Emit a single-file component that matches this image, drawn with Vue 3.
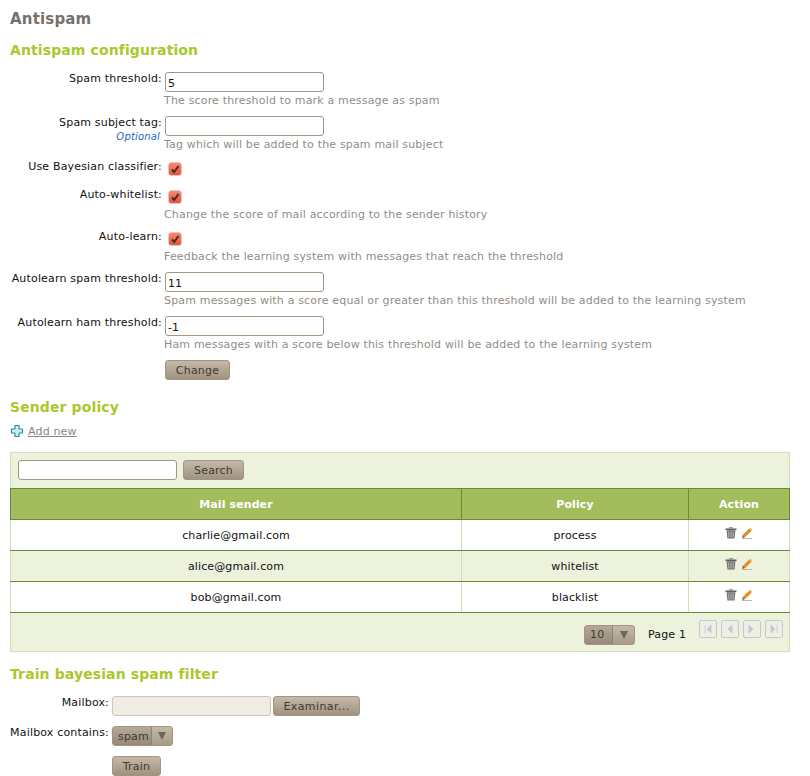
<script setup>
const rows = [
  { mail: 'charlie@gmail.com', policy: 'process' },
  { mail: 'alice@gmail.com', policy: 'whitelist' },
  { mail: 'bob@gmail.com', policy: 'blacklist' }
]
const pagerIcons = ['M3 1v8M9 1 5 5l4 4z', 'M8 1 4 5l4 4z', 'M3 1l4 4-4 4z', 'M9 1v8M3 1l4 4-4 4z']
</script>

<template>
  <div class="page">
    <h1>Antispam</h1>
    <h2 class="h-config">Antispam configuration</h2>

    <form class="config" @submit.prevent>
      <div class="row h44">
        <label>Spam threshold:</label>
        <div class="field"><input class="text" value="5" /><p class="hint">The score threshold to mark a message as spam</p></div>
      </div>
      <div class="row h44">
        <label>Spam subject tag:<em>Optional</em></label>
        <div class="field"><input class="text" /><p class="hint">Tag which will be added to the spam mail subject</p></div>
      </div>
      <div class="row h28">
        <label>Use Bayesian classifier:</label>
        <div class="field"><span class="check"><svg viewBox="0 0 12 12" width="12" height="12"><path d="M3 6.500 5.200 9 9.500 3" fill="none" stroke="#333" stroke-width="2"/></svg></span></div>
      </div>
      <div class="row h42">
        <label>Auto-whitelist:</label>
        <div class="field"><span class="check"><svg viewBox="0 0 12 12" width="12" height="12"><path d="M3 6.500 5.200 9 9.500 3" fill="none" stroke="#333" stroke-width="2"/></svg></span><p class="hint after-check">Change the score of mail according to the sender history</p></div>
      </div>
      <div class="row h42">
        <label>Auto-learn:</label>
        <div class="field"><span class="check"><svg viewBox="0 0 12 12" width="12" height="12"><path d="M3 6.500 5.200 9 9.500 3" fill="none" stroke="#333" stroke-width="2"/></svg></span><p class="hint after-check">Feedback the learning system with messages that reach the threshold</p></div>
      </div>
      <div class="row h44">
        <label>Autolearn spam threshold:</label>
        <div class="field"><input class="text" value="11" /><p class="hint">Spam messages with a score equal or greater than this threshold will be added to the learning system</p></div>
      </div>
      <div class="row h44">
        <label>Autolearn ham threshold:</label>
        <div class="field"><input class="text" value="-1" /><p class="hint">Ham messages with a score below this threshold will be added to the learning system</p></div>
      </div>
      <div class="row">
        <label></label>
        <div class="field"><button class="btn change">Change</button></div>
      </div>
    </form>

    <h2 class="h-policy">Sender policy</h2>
    <div class="addnew">
      <svg viewBox="0 0 14 14" width="14" height="14"><path d="M5 1.500h4v3.500h3.500v4H9v3.500H5V9H1.500V5H5z" fill="#cfeef2" stroke="#2b8ea3" stroke-width="1.200" stroke-linejoin="round"/></svg>
      <a>Add new</a>
    </div>

    <div class="panel">
      <div class="searchbar">
        <input class="text search" />
        <button class="btn searchbtn">Search</button>
      </div>
      <table>
        <thead>
          <tr><th class="c1">Mail sender</th><th class="c2">Policy</th><th class="c3">Action</th></tr>
        </thead>
        <tbody>
          <tr v-for="(r, i) in rows" :key="r.mail" :class="{ alt: i === 1 }">
            <td>{{ r.mail }}</td>
            <td>{{ r.policy }}</td>
            <td class="actions">
              <svg class="trash" viewBox="0 0 12 12" width="12" height="12"><path d="M.5 2.300h11" stroke="#5f5f5f" stroke-width="1.600"/><path d="M4 .8h4" stroke="#777" stroke-width="1"/><path d="M1.600 3.200h8.800l-.8 8.300H2.400z" fill="#737373"/><path d="M3.800 4.500v6M6 4.500v6M8.200 4.500v6" stroke="#c4c4c4" stroke-width=".9"/></svg>
              <svg viewBox="0 0 12 12" width="12" height="12"><path d="M1.800 7.800 8.300 1.500l2.300 2.200-6.400 6.300z" fill="#e48f2a"/><path d="M8.300 1.500 9.300.5l2.300 2.200-1 1z" fill="#f6b75a"/><path d="M1.800 7.800l2.400 2.200-3.100.9z" fill="#85603a"/><path d="M1 11.500h10" stroke="#b5b5b5"/></svg>
            </td>
          </tr>
        </tbody>
      </table>
      <div class="pager">
        <span class="select size"><span class="val">10</span><span class="arrow"><i></i></span></span>
        <span class="pagelabel">Page 1</span>
        <span class="pbtns">
          <span v-for="d in pagerIcons" :key="d" class="pbtn"><svg viewBox="0 0 12 10" width="12" height="10"><path :d="d" fill="#c8c8c8" stroke="#c8c8c8" stroke-width=".8"/></svg></span>
        </span>
      </div>
    </div>

    <h2 class="h-train">Train bayesian spam filter</h2>
    <form class="train" @submit.prevent>
      <div class="trow">
        <label>Mailbox:</label>
        <div class="filefield"><span class="filebox"></span><button class="btn browse">Examinar...</button></div>
      </div>
      <div class="trow">
        <label>Mailbox contains:</label>
        <span class="select kind"><span class="val">spam</span><span class="arrow"><i></i></span></span>
      </div>
      <div class="trow">
        <label></label>
        <button class="btn trainbtn">Train</button>
      </div>
    </form>
  </div>
</template>

<style>
html, body { margin: 0; background: #fff; }
</style>

<style scoped>
.page {
  width: 780px;
  height: 776px;
  overflow: hidden;
  padding: 0 10px;
  font-family: "DejaVu Sans", sans-serif;
  font-size: 11px;
  letter-spacing: .17px;
  color: #111;
}
h1 {
  margin: 0;
  padding-top: 10px;
  height: 18px;
  line-height: 18px;
  font-size: 15px;
  font-weight: bold;
  color: #776f6a;
}
h2 {
  margin: 0;
  font-size: 14px;
  line-height: 18px;
  height: 18px;
  font-weight: bold;
  letter-spacing: .11px;
  color: #a9c82c;
}
.h-config { margin-top: 13px; }
.config { margin-top: 13px; }
.row { display: flex; align-items: flex-start; }
.h44 { height: 44px; }
.h28 { height: 28px; }
.h42 { height: 42px; }
.row label {
  flex: none;
  width: 152px;
  text-align: right;
  line-height: 14px;
}
.row label em {
  display: block;
  font-size: 10px;
  line-height: 13px;
  padding-right: 2px;
  color: #1a6cb8;
}
.field { margin-left: 2px; min-width: 0; }
.text {
  display: block;
  box-sizing: border-box;
  width: 159px;
  height: 20px;
  margin-left: 1px;
  padding: 2px 2px 0;
  border: 1px solid #a39681;
  border-radius: 3px;
  background: #fff;
  font: 11px "DejaVu Sans", sans-serif;
  color: #111;
  outline: none;
}
.hint {
  margin: 2px 0 0;
  line-height: 14px;
  white-space: nowrap;
  color: #928c88;
}
.hint.after-check { margin-top: 5px; }
.check {
  display: block;
  box-sizing: border-box;
  width: 12px;
  height: 12px;
  margin: 3px 0 0 5px;
  border-radius: 2px;
  background: linear-gradient(#f58a74, #ea4f38);
  box-shadow: 0 0 0 .5px #e8816f;
}
.check svg { display: block; }
.btn {
  display: block;
  box-sizing: border-box;
  height: 20px;
  padding: 0;
  border: 1px solid #a39681;
  border-radius: 3px;
  background: linear-gradient(#c4b9a8, #a09280);
  font: 11px "DejaVu Sans", sans-serif;
  letter-spacing: .2px;
  color: #3f3a36;
}
.change { width: 65px; margin-left: 1px; }
.h-policy { margin-top: 18px; }
.addnew {
  display: flex;
  align-items: center;
  gap: 4px;
  height: 16px;
  margin-top: 7px;
}
.addnew a { color: #8a8580; text-decoration: underline; }
.panel {
  box-sizing: border-box;
  width: 780px;
  height: 200px;
  margin-top: 13px;
  border: 1px solid #d6dcb8;
  background: #ecf2dc;
}
.searchbar {
  display: flex;
  gap: 6px;
  height: 35px;
  padding: 7px 0 0 7px;
  box-sizing: border-box;
}
.search { width: 159px; margin-left: 0; }
.searchbtn { width: 61px; }
table {
  width: 780px;
  margin-left: -1px;
  border-collapse: collapse;
  table-layout: fixed;
}
th {
  height: 30px;
  padding: 0;
  background: #a4bd5c;
  border: 1px solid #6d8a37;
  font-weight: bold;
  color: #fff;
  letter-spacing: .1px;
}
td {
  height: 30px;
  padding: 0;
  text-align: center;
  background: #fff;
  border-bottom: 1px solid #6d8a37;
  border-right: 1px solid #d6dcb8;
  border-left: 1px solid #d6dcb8;
  letter-spacing: .12px;
}
tr.alt td { background: #ecf2dc; }
.c1 { width: 450px; }
.c2 { width: 226px; }
.actions svg { vertical-align: -1px; margin: 0; position: relative; top: -1px; }
.actions .trash { margin-right: 3px; left: -1px; }
.pager {
  display: flex;
  align-items: flex-start;
  height: 39px;
  padding-left: 573px;
  box-sizing: border-box;
}
.select {
  display: flex;
  box-sizing: border-box;
  height: 20px;
  border: 1px solid #a39681;
  border-radius: 3px;
  background: linear-gradient(#c4b9a8, #a89a88);
  color: #3f3a36;
  line-height: 18px;
}
.select .val {
  border-right: 1px solid #8f8372;
  box-sizing: border-box;
  background: linear-gradient(#b6a996, #98897a);
  border-radius: 2px 0 0 2px;
}
.select .arrow {
  flex: 1;
  display: flex;
  align-items: center;
  justify-content: center;
}
.select i {
  width: 0;
  height: 0;
  border-left: 4px solid transparent;
  border-right: 4px solid transparent;
  border-top: 8px solid #6f6659;
}
.size { width: 51px; margin-top: 12px; }
.size .val { width: 28px; padding-left: 5px; }
.pagelabel { margin: 15px 0 0 13px; line-height: 14px; }
.pbtns { display: flex; gap: 4px; margin: 7px 0 0 13px; }
.pbtn {
  display: flex;
  align-items: center;
  justify-content: center;
  box-sizing: border-box;
  width: 18px;
  height: 18px;
  border: 1px solid #c8c8c8;
  border-radius: 2px;
  background: #ecefe8;
}
.h-train { margin-top: 13px; }
.train { margin-top: 13px; }
.trow { display: flex; align-items: flex-start; height: 30px; }
.trow label {
  flex: none;
  width: 99px;
  text-align: right;
  line-height: 14px;
  white-space: nowrap;
}
.filefield { display: flex; gap: 2px; margin-left: 3px; }
.filebox {
  box-sizing: border-box;
  width: 159px;
  height: 20px;
  border: 1px solid #cfc6b4;
  border-radius: 3px;
  background: #f0ece4;
}
.browse { width: 87px; letter-spacing: .4px; }
.kind { width: 61px; margin-left: 3px; }
.kind .val { width: 39px; padding-left: 5px; line-height: 19px; }
.trainbtn { width: 49px; margin-left: 3px; }
</style>
